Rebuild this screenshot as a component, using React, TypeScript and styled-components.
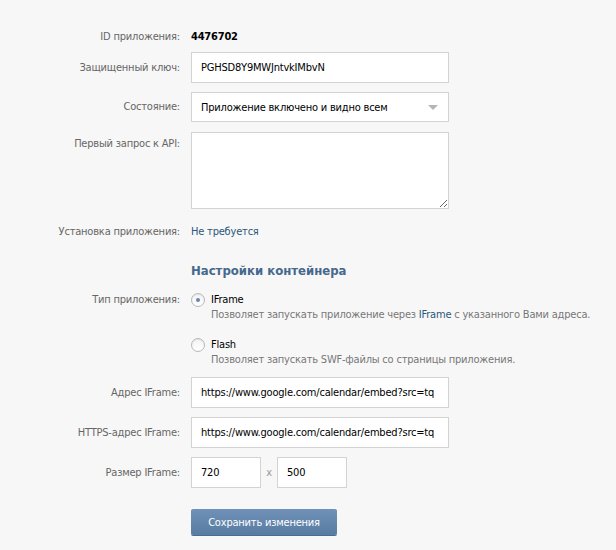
import styled, { createGlobalStyle } from 'styled-components'

const GlobalStyle = createGlobalStyle`
  body {
    margin: 0;
    background: #f7f7f7;
    font-family: "DejaVu Sans Condensed", "DejaVu Sans", Tahoma, sans-serif;
    font-size: 11px;
    letter-spacing: -0.2px;
    color: #000;
  }
`

const Page = styled.form`
  width: 616px;
  height: 550px;
  padding-top: 22px;
  box-sizing: border-box;
`

const Row = styled.div<{ $top?: number; $height?: number; $align?: string }>`
  display: grid;
  grid-template-columns: 180px 258px;
  column-gap: 11px;
  align-items: ${p => p.$align || 'center'};
  margin-top: ${p => p.$top || 0}px;
  min-height: ${p => p.$height || 0}px;
`

const Label = styled.div<{ $pad?: number }>`
  text-align: right;
  color: #666;
  line-height: 14px;
  padding-top: ${p => p.$pad || 0}px;
`

const Value = styled.div<{ $link?: boolean; $bold?: boolean }>`
  line-height: 14px;
  color: ${p => (p.$link ? '#2b587a' : '#000')};
  font-weight: ${p => (p.$bold ? 700 : 400)};
`

const Input = styled.input<{ $w?: number }>`
  box-sizing: border-box;
  width: ${p => p.$w || 258}px;
  height: 31px;
  margin: 0;
  padding: 0 9px;
  border: 1px solid #d3d3d3;
  background: #fff;
  font-family: inherit;
  font-size: 11px;
  letter-spacing: -0.2px;
  color: #000;
  outline: none;
`

const SelectBox = styled.div`
  box-sizing: border-box;
  height: 30px;
  display: flex;
  align-items: center;
  justify-content: space-between;
  padding: 0 9px;
  border: 1px solid #d3d3d3;
  background: #fff;
`

const Arrow = styled.span`
  width: 0;
  height: 0;
  border-left: 5px solid transparent;
  border-right: 5px solid transparent;
  border-top: 5px solid #b5b5b5;
  margin-right: 1px;
`

const TextArea = styled.textarea`
  box-sizing: border-box;
  width: 258px;
  height: 77px;
  margin: 0;
  border: 1px solid #d3d3d3;
  background: #fff;
  font-family: inherit;
  font-size: 11px;
  display: block;
  outline: none;
`

const Heading = styled.h2`
  grid-column: 2;
  margin: 0;
  font-size: 13px;
  line-height: 18px;
  font-weight: 700;
  letter-spacing: 0;
  color: #45688e;
`

const Options = styled.div`
  display: flex;
  flex-direction: column;
  gap: 16px;
`

const Option = styled.label`
  display: grid;
  grid-template-columns: 20px auto;
  align-items: center;
  cursor: pointer;
`

const Radio = styled.span<{ $on?: boolean }>`
  box-sizing: border-box;
  width: 14px;
  height: 14px;
  border-radius: 50%;
  border: 1px solid #b9b9b9;
  background: linear-gradient(#f3f3f3, #fff);
  box-shadow: inset 0 1px 1px rgba(0, 0, 0, 0.08);
  display: flex;
  align-items: center;
  justify-content: center;
  &::after {
    content: '';
    width: 4px;
    height: 4px;
    border-radius: 50%;
    background: ${p => (p.$on ? '#6a86a8' : 'transparent')};
  }
`

const OptTitle = styled.span`
  line-height: 14px;
  color: #000;
`

const OptDesc = styled.span`
  grid-column: 2;
  line-height: 14px;
  margin-top: 1px;
  color: #777;
  white-space: nowrap;
  & b {
    font-weight: 400;
    color: #2b587a;
  }
`

const SizeRow = styled.div`
  display: flex;
  align-items: center;
`

const Times = styled.span`
  width: 16px;
  text-align: center;
  color: #999;
`

const Button = styled.button`
  grid-column: 2;
  width: 146px;
  height: 26px;
  margin: 0;
  padding: 0;
  border: 0;
  border-radius: 2px;
  background: linear-gradient(#7092b8, #587ba1);
  box-shadow: 0 1px 0 #4c6c92;
  color: #fff;
  font-family: inherit;
  font-size: 11px;
  letter-spacing: -0.2px;
  cursor: pointer;
`

export default function App() {
  return (
    <>
      <GlobalStyle />
      <Page onSubmit={e => e.preventDefault()}>
        <Row $height={30}>
          <Label>ID приложения:</Label>
          <Value $bold>4476702</Value>
        </Row>
        <Row>
          <Label>Защищенный ключ:</Label>
          <Input defaultValue="PGHSD8Y9MWJntvkIMbvN" />
        </Row>
        <Row $top={9}>
          <Label>Состояние:</Label>
          <SelectBox>
            <span>Приложение включено и видно всем</span>
            <Arrow />
          </SelectBox>
        </Row>
        <Row $top={10} $align="start">
          <Label $pad={5}>Первый запрос к API:</Label>
          <TextArea />
        </Row>
        <Row $top={16}>
          <Label>Установка приложения:</Label>
          <Value $link>Не требуется</Value>
        </Row>
        <Row $top={23}>
          <Heading>Настройки контейнера</Heading>
        </Row>
        <Row $top={13} $align="start">
          <Label>Тип приложения:</Label>
          <Options>
            <Option>
              <Radio $on />
              <OptTitle>IFrame</OptTitle>
              <OptDesc>
                Позволяет запускать приложение через <b>IFrame</b> с указанного Вами адреса.
              </OptDesc>
            </Option>
            <Option>
              <Radio />
              <OptTitle>Flash</OptTitle>
              <OptDesc>Позволяет запускать SWF-файлы со страницы приложения.</OptDesc>
            </Option>
          </Options>
        </Row>
        <Row $top={10}>
          <Label>Адрес IFrame:</Label>
          <Input defaultValue="https://www.google.com/calendar/embed?src=tq" />
        </Row>
        <Row $top={9}>
          <Label>HTTPS-адрес IFrame:</Label>
          <Input defaultValue="https://www.google.com/calendar/embed?src=tq" />
        </Row>
        <Row $top={9}>
          <Label>Размер IFrame:</Label>
          <SizeRow>
            <Input $w={70} defaultValue="720" />
            <Times>x</Times>
            <Input $w={70} defaultValue="500" />
          </SizeRow>
        </Row>
        <Row $top={21}>
          <Button type="submit">Сохранить изменения</Button>
        </Row>
      </Page>
    </>
  )
}
